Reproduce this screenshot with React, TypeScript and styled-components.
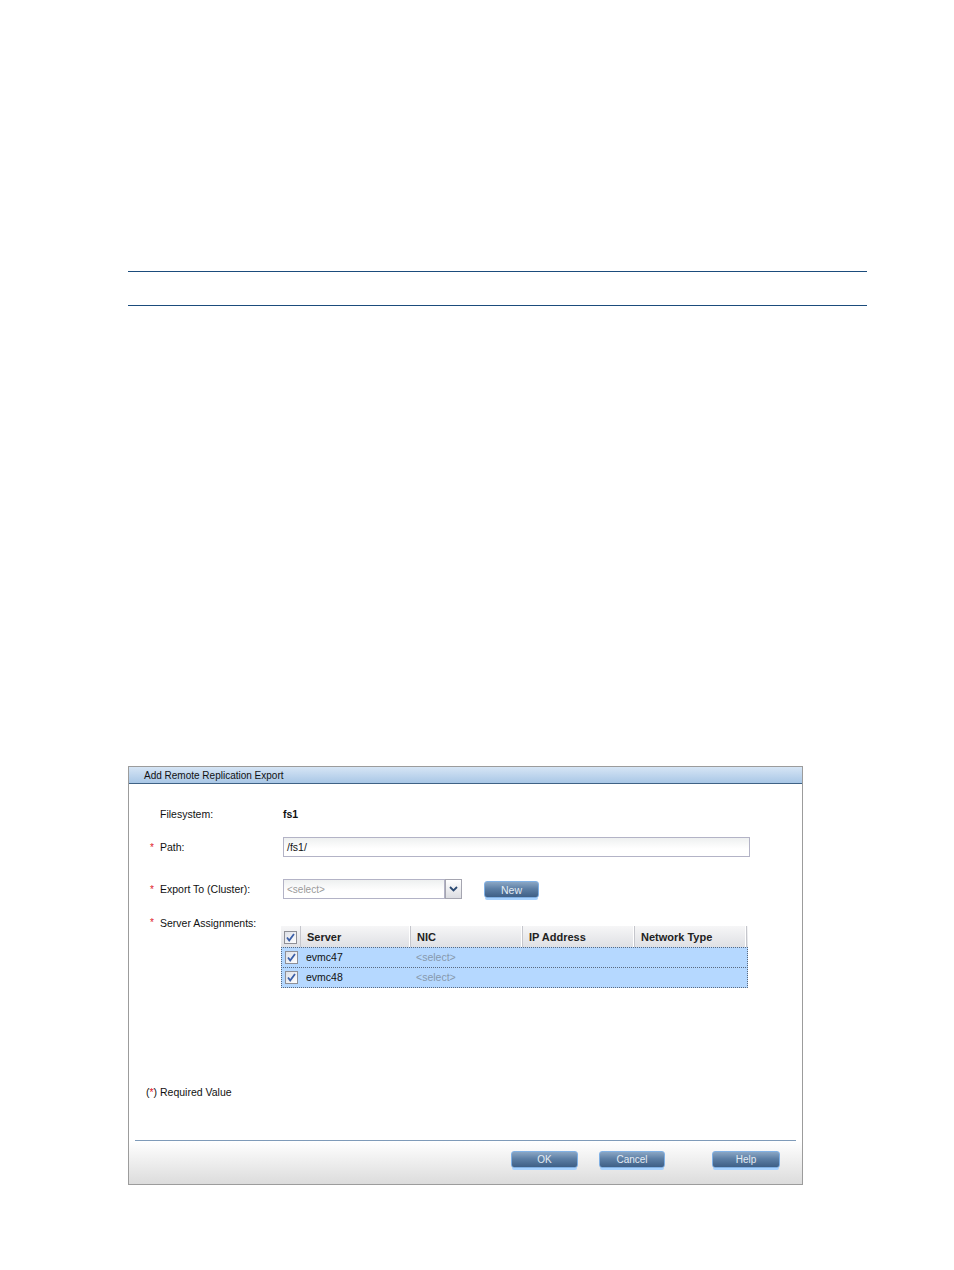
import React from "react";
import styled, { createGlobalStyle } from "styled-components";

const Global = createGlobalStyle`
  html, body { margin: 0; padding: 0; background: #fff; }
  body { font-family: "Liberation Sans", Arial, sans-serif; color: #111; }
`;

const Page = styled.div`
  width: 954px;
  height: 1270px;
  box-sizing: border-box;
  padding-left: 128px;
  padding-top: 271px;
  overflow: hidden;
`;

const RuleBlock = styled.div`
  width: 739px;
  height: 33px;
  border-top: 1.3px solid #1b4c7c;
  border-bottom: 1.3px solid #1b4c7c;
`;

const Dialog = styled.div`
  margin-top: 460px;
  width: 675px;
  height: 419px;
  box-sizing: border-box;
  border: 1px solid #9c9c9c;
  display: flex;
  flex-direction: column;
  background: #fff;
`;

const Header = styled.div`
  height: 16px;
  border-bottom: 1px solid #3f6285;
  background: linear-gradient(#d6e5f5, #a9c7e6);
  font-size: 10px;
  line-height: 18px;
  padding-left: 15px;
  color: #111;
`;

const Body = styled.div`
  flex: 1;
  display: flex;
  flex-direction: column;
  padding-left: 17px;
`;

const Row = styled.div<{ $top: number; $h: number; $align?: string }>`
  display: flex;
  align-items: ${(p) => p.$align || "center"};
  margin-top: ${(p) => p.$top}px;
  min-height: ${(p) => p.$h}px;
`;

const Star = styled.span`
  width: 14px;
  color: #e0202a;
  font-size: 10px;
  padding-left: 4px;
  box-sizing: border-box;
`;

const Label = styled.span`
  width: 123px;
  font-size: 10.5px;
  line-height: 12px;
`;

const Value = styled.span`
  font-size: 10.5px;
  font-weight: bold;
`;

const TextInput = styled.div`
  width: 467px;
  height: 20px;
  box-sizing: border-box;
  border: 1px solid #b3b3c6;
  background: linear-gradient(#eef0f0, #ffffff 60%);
  font-size: 10.5px;
  line-height: 18px;
  padding-left: 3px;
`;

const SelectWrap = styled.div`
  display: flex;
  height: 20px;
`;

const SelectBox = styled.div`
  width: 162px;
  height: 20px;
  box-sizing: border-box;
  border: 1px solid #b3b3c6;
  background: linear-gradient(#eef0f0, #ffffff 60%);
  font-size: 10px;
  line-height: 19px;
  padding-left: 3px;
  color: #9a9a9a;
`;

const SelectBtn = styled.div`
  width: 17px;
  height: 20px;
  box-sizing: border-box;
  border: 1px solid #a5a5b0;
  background: linear-gradient(#ffffff, #dcdde2);
  display: flex;
  align-items: center;
  justify-content: center;
`;

const Btn = styled.div<{ $w: number }>`
  width: ${(p) => p.$w}px;
  height: 17px;
  box-sizing: border-box;
  border: 1px solid #80b0e4;
  border-radius: 3px;
  background: linear-gradient(#8aa6c4, #5d7fa5 45%, #3e5f86);
  color: #e4ecf4;
  font-size: 10px;
  line-height: 16px;
  text-align: center;
  box-shadow: 0 3px 0 -1px #a9d3ff;
`;

const NewBtn = styled(Btn)`
  margin-left: 22px;
  font-size: 10.5px;
`;

const Table = styled.div`
  margin-left: -2px;
  margin-top: 9px;
  width: 467px;
  display: flex;
  flex-direction: column;
`;

const HeadRow = styled.div`
  display: grid;
  grid-template-columns: 20px 110px 112px 112px 112px;
  height: 21px;
  background: linear-gradient(#f6f6f7, #dfe0e4);
  border-bottom: 1px solid #e8e8ec;
`;

const HeadCell = styled.div`
  font-size: 11px;
  font-weight: bold;
  line-height: 22px;
  padding-left: 6px;
  border-right: 1px solid #c5c6cc;
  box-shadow: inset -1px 0 0 #fff;
  color: #222;
`;

const CheckCell = styled.div<{ $head?: boolean }>`
  display: flex;
  align-items: center;
  justify-content: center;
  border-right: ${(p) => (p.$head ? "1px solid #c5c6cc" : "none")};
`;

const DataRow = styled.div`
  display: grid;
  grid-template-columns: 19px 110px 112px 112px 112px;
  height: 19px;
  background: #b5d8ff;
  border: 1px dotted #5a6a80;
  margin-top: -1px;
  &:first-of-type { margin-top: 0; }
`;

const Cell = styled.div<{ $muted?: boolean }>`
  font-size: 10.5px;
  line-height: 19px;
  padding-left: 5px;
  color: ${(p) => (p.$muted ? "#8798ad" : "#111")};
`;

const Required = styled.div`
  margin-top: auto;
  margin-bottom: 42px;
  font-size: 10.5px;
`;

const RedStar = styled.span`
  color: #e0202a;
`;

const Separator = styled.div`
  margin: 0 6px;
  height: 1px;
  background: #7f9bb9;
`;

const Footer = styled.div`
  height: 43px;
  background: linear-gradient(#ffffff, #dcdcdc);
  display: flex;
  align-items: flex-start;
  padding-top: 10px;
  box-sizing: border-box;
  padding-left: 382px;
`;

const Gap = styled.div<{ $w: number }>`
  width: ${(p) => p.$w}px;
`;

const Check: React.FC = () => (
  <svg width="13" height="13" viewBox="0 0 13 13">
    <defs>
      <linearGradient id="cbg" x1="0" y1="0" x2="1" y2="1">
        <stop offset="0" stopColor="#dcdfe6" />
        <stop offset="1" stopColor="#ffffff" />
      </linearGradient>
    </defs>
    <rect x="0.5" y="0.5" width="12" height="12" fill="url(#cbg)" stroke="#8e8f96" />
    <path d="M3 6.5 L5.2 9.5 L10 3" fill="none" stroke="#3b5fa8" strokeWidth="1.8" />
  </svg>
);

const Chevron: React.FC = () => (
  <svg width="9" height="6" viewBox="0 0 9 6">
    <path d="M1 1 L4.5 4.5 L8 1" fill="none" stroke="#2c4a72" strokeWidth="1.8" />
  </svg>
);

export default function App() {
  return (
    <Page>
      <Global />
      <RuleBlock />
      <Dialog>
        <Header>Add Remote Replication Export</Header>
        <Body>
          <Row $top={22} $h={16}>
            <Star />
            <Label>Filesystem:</Label>
            <Value>fs1</Value>
          </Row>
          <Row $top={15} $h={20}>
            <Star>*</Star>
            <Label>Path:</Label>
            <TextInput>/fs1/</TextInput>
          </Row>
          <Row $top={22} $h={20}>
            <Star>*</Star>
            <Label>Export To (Cluster):</Label>
            <SelectWrap>
              <SelectBox>&lt;select&gt;</SelectBox>
              <SelectBtn>
                <Chevron />
              </SelectBtn>
            </SelectWrap>
            <NewBtn $w={55}>New</NewBtn>
          </Row>
          <Row $top={18} $h={12} $align="flex-start">
            <Star>*</Star>
            <Label>Server Assignments:</Label>
          </Row>
          <Row $top={-12} $h={62} $align="flex-start">
            <Star />
            <Label />
            <Table>
              <HeadRow>
                <CheckCell $head>
                  <Check />
                </CheckCell>
                <HeadCell>Server</HeadCell>
                <HeadCell>NIC</HeadCell>
                <HeadCell>IP Address</HeadCell>
                <HeadCell>Network Type</HeadCell>
              </HeadRow>
              {["evmc47", "evmc48"].map((s) => (
                <DataRow key={s}>
                  <CheckCell>
                    <Check />
                  </CheckCell>
                  <Cell>{s}</Cell>
                  <Cell $muted>&lt;select&gt;</Cell>
                  <Cell />
                  <Cell />
                </DataRow>
              ))}
            </Table>
          </Row>
          <Required>
            (<RedStar>*</RedStar>) Required Value
          </Required>
        </Body>
        <Separator />
        <Footer>
          <Btn $w={67}>OK</Btn>
          <Gap $w={21} />
          <Btn $w={66}>Cancel</Btn>
          <Gap $w={47} />
          <Btn $w={68}>Help</Btn>
        </Footer>
      </Dialog>
    </Page>
  );
}
